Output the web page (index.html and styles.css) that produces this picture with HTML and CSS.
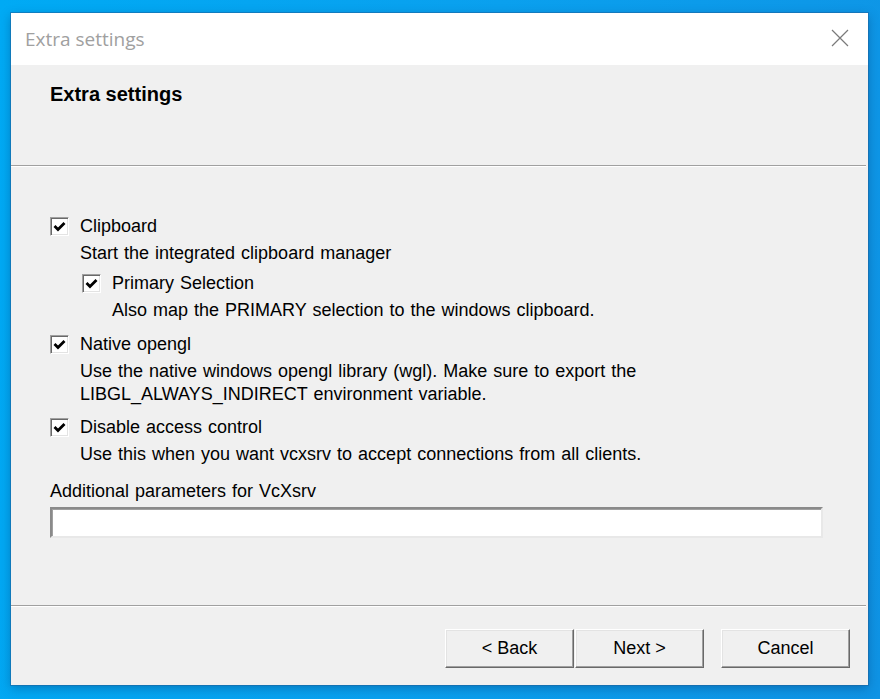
FILE: index.html
```html
<!DOCTYPE html>
<html>
<head>
<meta charset="utf-8">
<link rel="stylesheet" href="styles.css">
</head>
<body>
<div class="window">
  <div class="titlebar">
    <span class="title">Extra settings</span>
    <svg class="close" width="18" height="18" viewBox="0 0 18 18"><path d="M1 1 L17 17 M17 1 L1 17" stroke="#7a7a7a" stroke-width="1.2" fill="none"/></svg>
  </div>
  <div class="header">
    <div class="header-title">Extra settings</div>
  </div>
  <div class="sep"></div>
  <div class="content">
    <div class="option">
      <div class="check-row">
        <span class="checkbox"><svg width="13" height="13" viewBox="0 0 13 13"><path d="M1.5 6 L5 9.5 L11.5 3" stroke="#000" stroke-width="2.8" fill="none"/></svg></span>
        <span>Clipboard</span>
      </div>
      <div class="desc">Start the integrated clipboard manager</div>
      <div class="option nested">
        <div class="check-row">
          <span class="checkbox"><svg width="13" height="13" viewBox="0 0 13 13"><path d="M1.5 6 L5 9.5 L11.5 3" stroke="#000" stroke-width="2.8" fill="none"/></svg></span>
          <span>Primary Selection</span>
        </div>
        <div class="desc">Also map the PRIMARY selection to the windows clipboard.</div>
      </div>
    </div>
    <div class="option opengl">
      <div class="check-row">
        <span class="checkbox"><svg width="13" height="13" viewBox="0 0 13 13"><path d="M1.5 6 L5 9.5 L11.5 3" stroke="#000" stroke-width="2.8" fill="none"/></svg></span>
        <span>Native opengl</span>
      </div>
      <div class="desc">Use the native windows opengl library (wgl). Make sure to export the<br>LIBGL_ALWAYS_INDIRECT environment variable.</div>
    </div>
    <div class="option access">
      <div class="check-row">
        <span class="checkbox"><svg width="13" height="13" viewBox="0 0 13 13"><path d="M1.5 6 L5 9.5 L11.5 3" stroke="#000" stroke-width="2.8" fill="none"/></svg></span>
        <span>Disable access control</span>
      </div>
      <div class="desc">Use this when you want vcxsrv to accept connections from all clients.</div>
    </div>
    <div class="params">
      <div class="params-label">Additional parameters for VcXsrv</div>
      <div class="textbox"></div>
    </div>
  </div>
  <div class="sep"></div>
  <div class="footer">
    <div class="btn-pair">
      <button class="btn">&lt; Back</button>
      <button class="btn">Next &gt;</button>
    </div>
    <button class="btn">Cancel</button>
  </div>
</div>
</body>
</html>
```

FILE: styles.css
```css
html, body {
  margin: 0;
  height: 100%;
}
body {
  background: linear-gradient(100deg, #00aaf4 0%, #0aa0ee 50%, #0f93e4 100%);
  padding: 13px 12px 14px 11px;
  box-sizing: border-box;
  font-family: "Liberation Sans", Arial, sans-serif;
  font-size: 18px;
  word-spacing: 1px;
  color: #000;
}
.window {
  width: 857px;
  height: 672px;
  background: #f0f0f0;
  display: flex;
  flex-direction: column;
  box-shadow: 0 0 0 1px rgba(30, 100, 160, 0.55), 0 3px 10px rgba(0, 40, 90, 0.35);
}
.titlebar {
  height: 52px;
  background: #fff;
  display: flex;
  align-items: center;
  justify-content: space-between;
  padding: 0 19px 0 14px;
  flex-shrink: 0;
}
.title {
  font-family: "Open Sans", "Noto Sans", sans-serif;
  font-size: 19px;
  word-spacing: 0;
  color: #a0a0a0;
}
.close {
  margin-top: -2px;
}
.header {
  height: 100px;
  box-sizing: border-box;
  padding: 18px 0 0 39px;
  flex-shrink: 0;
}
.header-title {
  font-weight: bold;
  font-size: 20px;
  word-spacing: 0;
  line-height: 23px;
}
.sep {
  height: 1px;
  border-bottom: 1px solid #fff;
  background: #a0a0a0;
  margin-right: 2px;
  flex-shrink: 0;
}
.content {
  flex: 1;
  padding: 48px 45px 0 39px;
  line-height: 23px;
}
.option.opengl {
  margin-top: 11px;
}
.option.access {
  margin-top: 10px;
}
.option.nested {
  margin-left: 32px;
  margin-top: 7px;
}
.check-row {
  display: flex;
  align-items: center;
  gap: 11px;
  height: 23px;
}
.checkbox {
  width: 17px;
  height: 17px;
  border: 1px solid;
  border-color: #a0a0a0 #fff #fff #a0a0a0;
  background: #fff;
  box-shadow: inset 1px 1px 0 #696969, inset -1px -1px 0 #e3e3e3;
  display: flex;
  align-items: center;
  justify-content: center;
  flex-shrink: 0;
}
.desc {
  margin-left: 30px;
  margin-top: 4px;
}
.params {
  margin-top: 14px;
}
.textbox {
  margin-top: 4px;
  height: 27px;
  background: #fff;
  border: 2px solid;
  border-color: #8a8a8a #e8e8e8 #e8e8e8 #8a8a8a;
  box-shadow: inset 1px 1px 0 #a0a0a0;
}
.footer {
  height: 78px;
  flex-shrink: 0;
  display: flex;
  justify-content: flex-end;
  align-items: flex-start;
  padding: 22px 18px 0 0;
  box-sizing: border-box;
  gap: 17px;
}
.btn-pair {
  display: flex;
  gap: 1px;
}
.btn {
  width: 129px;
  height: 39px;
  background: #f0f0f0;
  font-family: "Liberation Sans", Arial, sans-serif;
  font-size: 18px;
  word-spacing: 0;
  color: #000;
  border: 1px solid;
  border-color: #fff #696969 #696969 #fff;
  box-shadow: inset -1px -1px 0 #a0a0a0, inset 1px 1px 0 #e3e3e3;
  padding: 0;
  margin: 0;
}
```
